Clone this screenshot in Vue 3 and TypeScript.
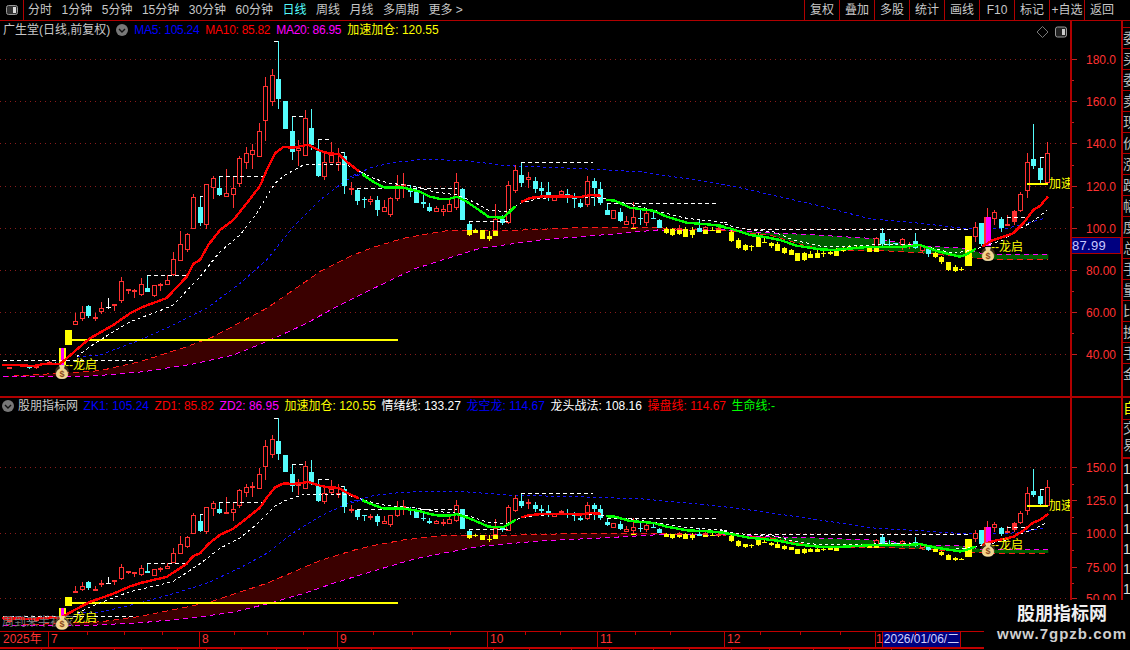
<script setup lang="ts">
type Pt = [number, number]
type Raw = [number, number, number, number, number, string]

const z3 = (x: number, y: number): Pt => [x / 3, 60 + y / 3]
const z4 = (x: number, y: number): Pt => [340 + x / 3, 140 + y / 3]
const z5 = (x: number, y: number): Pt => [720 + x / 3, 120 + y / 3]
const list = (f: (x: number, y: number) => Pt, a: number[]): Pt[] => {
  const out: Pt[] = []
  for (let i = 0; i < a.length; i += 2) out.push(f(a[i], a[i + 1]))
  return out
}

const c3: Raw[] = [
  [28, 922, 928, 920, 928, 'r'], [88, 920, 924, 916, 926, 'c'], [110, 918, 925, 916, 926, 'r'], [148, 905, 912, 904, 914, 'r'], [165, 908, 910, 905, 914, 'c'],
  [226, 784, 794, 760, 794, 'r'], [247, 757, 777, 737, 782, 'r'], [265, 738, 768, 736, 775, 'c'], [287, 772, 776, 760, 782, 'r'], [304, 745, 755, 727, 762, 'r'],
  [324, 742, 745, 714, 748, 'w'], [344, 731, 734, 731, 752, 'r'], [364, 664, 722, 652, 728, 'r'], [385, 686, 692, 686, 702, 'r'], [403, 690, 692, 688, 713, 'r'],
  [424, 673, 704, 655, 708, 'r'], [442, 684, 696, 645, 696, 'c'], [463, 676, 709, 674, 711, 'r'], [482, 673, 678, 668, 692, 'r'], [502, 661, 674, 645, 674, 'r'],
  [520, 598, 646, 576, 648, 'r'], [541, 553, 602, 514, 602, 'r'], [562, 522, 569, 518, 575, 'r'], [580, 412, 508, 403, 508, 'r'], [601, 441, 489, 408, 497, 'c'],
  [619, 373, 494, 373, 508, 'r'], [640, 354, 383, 348, 418, 'r'], [658, 384, 405, 349, 407, 'c'], [679, 400, 410, 327, 410, 'r'], [700, 385, 404, 349, 443, 'r'],
  [718, 295, 371, 289, 381, 'r'], [739, 280, 308, 262, 326, 'r'], [757, 271, 284, 252, 326, 'r'], [778, 214, 290, 188, 290, 'r'], [796, 79, 182, 52, 242, 'r'],
  [817, 46, 125, 27, 137, 'r'], [835, 57, 117, -57, 146, 'c'], [856, 123, 207, 123, 207, 'c'], [877, 213, 275, 168, 300, 'c'], [895, 263, 272, 240, 318, 'r'],
  [916, 175, 288, 150, 288, 'r'], [934, 204, 256, 148, 270, 'c'], [955, 274, 348, 238, 352, 'c'], [973, 305, 350, 274, 360, 'r'], [994, 286, 309, 246, 310, 'r'],
  [1015, 305, 315, 265, 332, 'r'],
]
const c4: Raw[] = [
  [13, 47, 137, 35, 162, 'c'], [34, 143, 149, 127, 165, 'r'], [52, 150, 183, 148, 196, 'c'], [72, 176, 177, 172, 204, 'c'], [91, 178, 186, 168, 196, 'r'],
  [112, 180, 210, 168, 228, 'c'], [133, 202, 215, 180, 215, 'r'], [151, 175, 224, 172, 232, 'r'], [172, 136, 177, 105, 182, 'r'], [190, 132, 136, 99, 175, 'r'],
  [211, 148, 156, 135, 172, 'c'], [229, 155, 188, 140, 190, 'c'], [250, 187, 191, 160, 205, 'c'], [268, 201, 213, 190, 216, 'c'], [289, 205, 215, 198, 215, 'r'],
  [310, 208, 215, 195, 228, 'r'], [328, 192, 215, 175, 217, 'r'], [349, 126, 204, 99, 210, 'r'], [367, 147, 240, 145, 240, 'c'], [388, 252, 270, 245, 270, 'c'],
  [388, 270, 285, 270, 288, 'y'], [406, 270, 278, 268, 280, 'y'], [427, 270, 297, 270, 297, 'y'], [448, 288, 297, 273, 303, 'y'], [466, 272, 288, 272, 288, 'y'],
  [466, 238, 272, 193, 272, 'r'], [487, 236, 248, 225, 254, 'c'], [505, 136, 250, 123, 252, 'r'], [526, 91, 152, 75, 160, 'r'], [544, 105, 130, 68, 140, 'c'],
  [565, 112, 119, 97, 144, 'r'], [586, 123, 147, 112, 160, 'c'], [604, 144, 153, 125, 165, 'c'], [625, 156, 165, 126, 182, 'c'], [643, 171, 182, 165, 184, 'r'],
  [664, 154, 166, 150, 175, 'r'], [682, 162, 165, 146, 190, 'c'], [703, 175, 178, 160, 204, 'c'], [721, 190, 200, 178, 203, 'c'], [742, 124, 194, 109, 200, 'r'],
  [763, 123, 144, 115, 197, 'c'], [781, 147, 188, 125, 196, 'c'], [802, 210, 224, 190, 226, 'c'], [820, 211, 236, 211, 236, 'r'], [841, 215, 243, 205, 247, 'c'],
  [859, 244, 254, 228, 254, 'r'], [880, 264, 266, 251, 268, 'y'], [880, 231, 251, 187, 264, 'r'], [901, 235, 236, 205, 254, 'c'], [919, 220, 248, 207, 258, 'r'],
  [940, 233, 234, 215, 237, 'c'], [958, 240, 263, 238, 263, 'c'], [979, 268, 279, 262, 281, 'y'], [997, 268, 285, 265, 288, 'y'], [1018, 270, 282, 268, 284, 'y'],
  [1018, 263, 270, 255, 270, 'r'], [1036, 268, 290, 262, 292, 'y'], [1057, 270, 284, 262, 294, 'y'], [1078, 265, 275, 237, 275, 'c'], [1096, 271, 281, 271, 282, 'y'],
  [1096, 261, 271, 258, 271, 'r'], [1117, 270, 272, 262, 274, 'y'], [1135, 270, 278, 270, 279, 'y'], [1135, 265, 270, 260, 270, 'r'],
]
const c5: Raw[] = [
  [34, 335, 362, 325, 365, 'y'], [55, 360, 385, 355, 388, 'y'], [76, 376, 390, 372, 392, 'y'], [94, 378, 380, 375, 392, 'y'], [115, 352, 380, 340, 382, 'y'],
  [133, 365, 367, 350, 368, 'y'], [154, 369, 378, 365, 383, 'y'], [172, 372, 392, 367, 394, 'y'], [193, 384, 398, 380, 402, 'y'], [214, 389, 404, 388, 404, 'y'],
  [232, 400, 422, 398, 423, 'y'], [253, 398, 420, 395, 423, 'y'], [271, 401, 413, 393, 414, 'y'], [292, 398, 413, 388, 414, 'y'], [310, 400, 402, 394, 410, 'y'],
  [331, 396, 403, 392, 405, 'y'], [349, 390, 407, 385, 408, 'y'], [370, 385, 392, 378, 395, 'y'], [388, 382, 387, 376, 388, 'y'], [409, 380, 385, 376, 388, 'y'],
  [448, 385, 395, 382, 396, 'y'], [469, 385, 395, 382, 396, 'y'], [469, 355, 382, 352, 384, 'r'], [487, 340, 372, 325, 380, 'c'], [508, 372, 374, 357, 382, 'c'],
  [526, 370, 373, 368, 376, 'c'], [547, 358, 375, 355, 390, 'r'], [568, 374, 376, 365, 388, 'r'], [586, 364, 385, 340, 388, 'c'], [607, 378, 392, 375, 398, 'r'],
  [625, 385, 403, 383, 410, 'c'], [646, 400, 411, 396, 413, 'y'], [664, 412, 427, 408, 432, 'y'], [685, 426, 451, 425, 452, 'y'], [706, 441, 453, 436, 456, 'y'],
  [724, 446, 447, 440, 453, 'y'], [766, 320, 350, 305, 366, 'r'], [784, 308, 373, 308, 378, 'c'], [823, 276, 297, 270, 316, 'r'], [844, 297, 325, 292, 336, 'c'],
  [862, 311, 315, 285, 318, 'r'], [883, 273, 305, 270, 315, 'R'], [901, 222, 274, 216, 276, 'r'], [922, 127, 212, 100, 233, 'r'], [940, 117, 137, 12, 146, 'c'],
  [961, 144, 180, 110, 190, 'c'], [982, 100, 190, 66, 196, 'r'],
]
const allCandles: { x: number; t: number; b: number; h: number; l: number; k: string }[] = []
const addC = (f: (x: number, y: number) => Pt, arr: Raw[]) => {
  for (const r of arr) {
    const [x, t] = f(r[0], r[1])
    allCandles.push({ x, t, b: f(r[0], r[2])[1], h: f(r[0], r[3])[1], l: f(r[0], r[4])[1], k: r[5] })
  }
}
addC(z3, c3)
addC(z4, c4)
addC(z5, c5)

const thick: { c: string; p: Pt[] }[] = [
  { c: '#ff0000', p: list(z3, [10, 915, 60, 916, 100, 918, 130, 912, 180, 912, 200, 895, 240, 860, 270, 835, 340, 795, 390, 760, 425, 742, 500, 714, 560, 650, 580, 612, 600, 600, 625, 555, 660, 510, 700, 480, 740, 430, 780, 378, 800, 330, 825, 280, 850, 261, 880, 263, 925, 254, 960, 272, 985, 280, 1015, 282, 1040, 305, 1075, 332]) },
  { c: '#00ff00', p: [...list(z3, [1090, 342]), ...list(z4, [70, 105, 100, 125, 130, 142, 190, 143, 240, 155, 270, 170, 300, 177, 330, 176, 350, 170, 380, 185, 420, 212, 445, 230, 490, 233, 525, 200])] },
  { c: '#ff0000', p: list(z4, [545, 185, 570, 174, 610, 169, 700, 170, 720, 172, 750, 165, 780, 167]) },
  { c: '#00ff00', p: [...list(z4, [802, 180, 825, 182, 870, 203, 940, 212, 980, 230, 1040, 248, 1100, 253, 1150, 258]), ...list(z5, [0, 320, 30, 325, 90, 345, 130, 350, 180, 360, 230, 377, 300, 388, 340, 390, 400, 385, 450, 380, 550, 380, 600, 375, 650, 393, 720, 410, 740, 403, 765, 388])] },
  { c: '#ff0000', p: list(z5, [790, 378, 815, 362, 880, 340, 910, 310, 940, 270, 960, 258, 982, 232]) },
]
const whiteLine: Pt[] = [
  ...list(z3, [230, 890, 270, 860, 340, 815, 390, 785, 480, 752, 520, 735, 600, 650, 660, 575, 720, 525, 770, 460, 800, 410, 825, 370, 855, 345, 910, 315, 960, 312, 1040, 315, 1100, 345]),
  ...list(z4, [60, 95, 100, 115, 140, 128, 230, 140, 280, 155, 350, 165, 400, 185, 445, 210, 500, 215, 540, 190, 600, 175, 700, 170, 790, 175, 840, 185, 900, 200, 960, 215, 1040, 235, 1160, 248]),
  ...list(z5, [0, 307, 40, 320, 80, 328, 160, 335, 220, 360, 300, 378, 400, 378, 500, 372, 600, 375, 700, 400, 760, 390, 850, 360, 890, 330, 930, 310, 980, 272]),
]
const blueLine: Pt[] = [
  ...list(z3, [230, 890, 300, 885, 420, 840, 520, 795, 620, 745, 720, 670, 800, 600, 880, 500, 960, 420, 1040, 360, 1090, 340]),
  ...list(z4, [30, 110, 100, 80, 160, 68, 250, 58, 380, 62, 500, 77, 700, 85, 900, 95, 1100, 125, 1200, 143]),
  ...list(z5, [100, 212, 300, 258, 450, 296, 600, 310, 740, 326, 860, 325, 900, 315, 975, 295]),
]
const bandTop: Pt[] = [...list(z3, [10, 950, 300, 932, 420, 905, 560, 860, 640, 830, 800, 745, 960, 635, 1060, 585]), ...list(z4, [100, 322, 190, 295, 300, 275, 330, 271, 500, 272, 740, 262, 940, 262, 1020, 268, 1140, 272])]
const bandBot: Pt[] = [...list(z3, [10, 950, 280, 948, 430, 935, 580, 912, 700, 885, 800, 845, 920, 790, 1000, 745, 1100, 695]), ...list(z4, [220, 388, 300, 362, 420, 325, 600, 300, 810, 283, 950, 270, 1140, 271])]
const greenTop: Pt[] = list(z5, [0, 328, 130, 338, 250, 343, 470, 356, 600, 378, 740, 385, 790, 402, 985, 403])
const greenBot: Pt[] = list(z5, [0, 330, 150, 345, 260, 378, 340, 392, 490, 392, 600, 398, 760, 414, 850, 420, 985, 418])

const steps: [number, number, number][] = [
  [z3(10, 0)[0], z3(400, 0)[0], z3(0, 901)[1]], [z3(442, 0)[0], z3(560, 0)[0], z3(0, 645)[1]], [z3(658, 0)[0], z3(790, 0)[0], z3(0, 349)[1]],
  [z3(877, 0)[0], z3(916, 0)[0], z3(0, 169)[1]], [z3(955, 0)[0], z3(994, 0)[0], z3(0, 238)[1]], [z3(1033, 0)[0] - 3, z3(1033, 0)[0], z3(0, 275)[1]],
  [z3(1072, 0)[0], 456.7, z3(0, 385)[1]], [z4(388, 0)[0], z4(505, 0)[0], z4(0, 244)[1]], [z4(544, 0)[0], z4(760, 0)[0], z4(0, 67)[1]],
  [z4(802, 0)[0], z4(1135, 0)[0], z4(0, 190)[1]], [z5(80, 0)[0], z5(745, 0)[0], z5(0, 327)[1]], [z5(860, 0)[0], z5(920, 0)[0], z5(0, 290)[1]],
  [z3(835, 0)[0] - 4, z3(835, 0)[0], 41], [z5(961, 0)[0], z5(961, 0)[0] + 4, z5(0, 110)[1]], [z3(601, 0)[0], z3(601, 0)[0] + 3, z3(0, 408)[1]],
]

interface Pane {
  key: string
  h: number
  grid: number[]
  ticks: number[]
  minor: number[]
  labels: { y: number; t: string }[]
  top: string
  bot: string
  band: string
  gband: string
  gtop: string
  gbot: string
  blue: string
  white: string
  lines: { c: string; d: string }[]
  steps: { x1: number; x2: number; y: number }[]
  wicks: { x: number; y1: number; y2: number; c: string }[]
  bodies: { x: number; y: number; w: number; h: number; s: string; f: string }[]
  my: (y: number) => number
}

function pane(key: string, h: number, my: (y: number) => number, grid: number[], ticks: number[], labels: { y: number; t: string }[]): Pane {
  const s = (p: Pt[]) => p.map(q => `${q[0].toFixed(1)},${my(q[1]).toFixed(1)}`).join(' ')
  const wicks: Pane['wicks'] = []
  const bodies: Pane['bodies'] = []
  for (const c of allCandles) {
    const cx = Math.round(c.x - 0.5) + 0.5
    const col = c.k === 'c' ? '#54fcfc' : c.k === 'y' ? '#ffff00' : c.k === 'w' ? '#ffffff' : '#ff3232'
    const t = Math.round(my(c.t))
    const b = Math.max(Math.round(my(c.b)), t + 1)
    wicks.push({ x: cx, y1: Math.round(my(c.h)), y2: Math.round(my(c.l)), c: col })
    if (c.k === 'r') bodies.push({ x: cx - 2, y: t + 0.5, w: 4, h: Math.max(b - t - 1, 1), s: col, f: '#000' })
    else bodies.push({ x: cx - 2.5, y: t, w: 5, h: b - t, s: 'none', f: c.k === 'R' ? '#ff3232' : col })
  }
  return {
    key, h, my, grid, ticks, labels,
    minor: ticks.slice(0, -1).map((t, i) => (t + ticks[i + 1]) / 2),
    top: s(bandTop), bot: s(bandBot), band: s([...bandTop, ...[...bandBot].reverse()]),
    gband: s([...greenTop, ...[...greenBot].reverse()]), gtop: s(greenTop), gbot: s(greenBot),
    blue: s(blueLine), white: s(whiteLine),
    lines: thick.map(l => ({ c: l.c, d: s(l.p) })),
    steps: steps.map(q => ({ x1: q[0], x2: q[1], y: Math.round(my(q[2])) + 0.5 })),
    wicks, bodies,
  }
}

const upY = (y: number) => y - 21
const lowY = (y: number) => 429 + 0.619 * (y - 59) - 398
const panes: Pane[] = [
  pane('a', 375, upY, [59, 101, 143, 186, 228, 270, 312, 354].map(upY), [59, 101, 143, 186, 228, 270, 312, 354].map(upY),
    ['180.0', '160.0', '140.0', '120.0', '100.0', '80.00', '60.00', '40.00'].map((t, i) => ({ y: upY([59, 101.5, 143.5, 186, 228, 270.5, 312.5, 354.5][i]), t }))),
  pane('b', 232, lowY, [467, 533, 598].map(y => y - 398), [467, 500, 533, 567, 598].map(y => y - 398),
    ['150.0', '125.0', '100.0', '75.00', '50.00'].map((t, i) => ({ y: [467, 500, 533, 567, 598][i] - 398, t }))),
]

const leftTabs = [
  { t: '分时' }, { t: '1分钟' }, { t: '5分钟' }, { t: '15分钟' }, { t: '30分钟' }, { t: '60分钟' },
  { t: '日线', on: true }, { t: '周线' }, { t: '月线' }, { t: '多周期' }, { t: '更多 >' },
]
const rightTabs = ['复权', '叠加', '多股', '统计', '画线', 'F10', '标记', '+自选', '返回']
const legendA = [
  { t: 'MA5: 105.24', c: '#0000ff', tight: true }, { t: 'MA10: 85.82', c: '#ff0000', tight: true }, { t: 'MA20: 86.95', c: '#ff00ff', tight: true }, { t: '加速加仓: 120.55', c: '#ffff00' },
]
const legendB = [
  { t: 'ZK1: 105.24', c: '#0000ff' }, { t: 'ZD1: 85.82', c: '#ff0000' }, { t: 'ZD2: 86.95', c: '#ff00ff' }, { t: '加速加仓: 120.55', c: '#ffff00' },
  { t: '情绪线: 133.27', c: '#ffffff' }, { t: '龙空龙: 114.67', c: '#0000ff' }, { t: '龙头战法: 108.16', c: '#ffffff' }, { t: '操盘线: 114.67', c: '#ff0000' }, { t: '生命线:-', c: '#00ff00' },
]
const timeCells = [
  { t: '2025年', w: 49 }, { t: '7', w: 151 }, { t: '8', w: 138 }, { t: '9', w: 150 }, { t: '10', w: 110 }, { t: '11', w: 127 }, { t: '12', w: 151 }, { t: '1', w: 7 },
]
const timeTicks = [87, 124, 162, 234, 267, 303, 373, 412, 450, 525, 560, 635, 670, 760, 800, 840, 915]
const bottomCells = [42, 31, 42, 27, 36, 29, 35, 35, 31, 32, 32, 40, 38, 44, 36, 42, 38, 44, 36, 42, 38, 44, 36, 42, 38]
const sideTop = '委买委卖现价涨跌幅度总手量比换手金'.split('')
const sideNums = Array.from({ length: 7 }, () => '1')
const bags = [{ x: 62, y: 372 }, { x: 988, y: 254 }]
</script>

<template>
  <div class="screen">
    <header class="toolbar">
      <div class="corner">
        <svg width="12" height="10" viewBox="0 0 12 10">
          <rect x="0.5" y="0.5" width="11" height="9" rx="2" fill="#333" stroke="#999" />
          <rect x="7" y="2" width="3" height="6" fill="#ddd" />
        </svg>
      </div>
      <nav class="tabs">
        <span v-for="t in leftTabs" :key="t.t" :class="{ on: t.on }">{{ t.t }}</span>
      </nav>
      <nav class="actions">
        <span v-for="t in rightTabs" :key="t">{{ t }}</span>
      </nav>
    </header>

    <div class="body">
      <div class="main">
        <section v-for="(p, i) in panes" :key="p.key" class="pane" :class="'pane-' + p.key">
          <svg class="plot" width="1121" :height="p.h" :viewBox="`0 0 1121 ${p.h}`">
            <line v-for="g in p.grid" :key="'g' + g" x1="0" x2="1070" :y1="g + 0.5" :y2="g + 0.5" class="grid" />
            <polygon :points="p.band" fill="#3a0000" />
            <polygon :points="p.gband" fill="#005c00" />
            <polyline :points="p.top" class="dash-red" />
            <polyline :points="p.bot" class="dash-mag" />
            <polyline :points="p.gtop" class="dash-mag" />
            <polyline :points="p.gbot" class="dash-red" />
            <polyline :points="p.blue" class="dash-blue" />
            <g shape-rendering="crispEdges">
              <line v-for="(w, k) in p.wicks" :key="'w' + k" :x1="w.x" :x2="w.x" :y1="w.y1" :y2="w.y2" :stroke="w.c" />
              <rect v-for="(b, k) in p.bodies" :key="'b' + k" :x="b.x" :y="b.y" :width="b.w" :height="b.h" :fill="b.f" :stroke="b.s" />
              <!-- signal bars -->
              <rect x="65" :y="p.my(330)" width="7" :height="p.my(345) - p.my(330)" fill="#ffff00" />
              <rect x="72" :y="p.my(340) - 1" width="326" height="2" fill="#ffff00" />
              <rect x="59" :y="p.my(348)" width="7" :height="p.my(365) - p.my(348)" fill="#ffff00" />
              <rect x="61" :y="p.my(348)" width="3" :height="p.my(365) - p.my(348)" fill="#ff00ff" />
              <rect x="965" :y="p.my(236)" width="7" :height="p.my(266) - p.my(236)" fill="#ffff00" />
              <rect x="984" :y="p.my(217)" width="7" :height="p.my(246) - p.my(217)" fill="#ff3232" />
              <rect x="986" :y="p.my(217)" width="5" :height="p.my(246) - p.my(217)" fill="#ff00ff" />
              <line x1="987.5" x2="987.5" :y1="p.my(208)" :y2="p.my(217)" stroke="#ff3232" />
              <rect x="1027" :y="p.my(184) - 1" width="21" height="2" fill="#ffff00" />
            </g>
            <line v-for="(s, k) in p.steps" :key="'s' + k" :x1="s.x1" :x2="s.x2" :y1="s.y" :y2="s.y" class="dash-step" />
            <polyline :points="p.white" class="dash-white" />
            <polyline v-for="(l, k) in p.lines" :key="'l' + k" :points="l.d" :stroke="l.c" class="thick" />

            <text v-if="i === 1" x="2" y="228" class="ghost">周到来半初家</text>
            <text x="65" :y="p.my(365) + 4" class="mark">--龙启</text>
            <text x="991" :y="p.my(247) + 4" class="mark">--龙启</text>
            <text x="1049" :y="p.my(184) + 4" class="mark">加速</text>

            <g v-for="b in bags" :key="b.x" :transform="`translate(${b.x} ${p.my(b.y)})`">
              <circle r="7" fill="#6b4a20" opacity="0.55" />
              <path d="M-2.5 -6.5 L2.5 -6.5 L1.5 -3.5 C5 -2 6 1 5.5 3.5 C5 6 2.5 6.5 0 6.5 C-2.5 6.5 -5 6 -5.5 3.5 C-6 1 -5 -2 -1.5 -3.5 Z" fill="#f4d48a" stroke="#fff2c0" stroke-width="0.7" />
              <text y="4.5" text-anchor="middle" class="dollar">$</text>
            </g>

            <rect x="1070" y="0" width="51" :height="p.h" fill="#000" />
            <rect x="1070" y="0" width="2" :height="p.h" fill="#b00000" />
            <line v-for="t in p.ticks" :key="'t' + t" x1="1072" x2="1077" :y1="t + 0.5" :y2="t + 0.5" class="tick" />
            <line v-for="t in p.minor" :key="'m' + t" x1="1072" x2="1074" :y1="Math.round(t) + 0.5" :y2="Math.round(t) + 0.5" class="tick" />
            <text v-for="l in p.labels" :key="l.t" x="1086" :y="l.y + 4.5" class="axis">{{ l.t }}</text>
            <template v-if="i === 0">
              <rect x="1071.5" y="216.5" width="49" height="16" fill="#000080" stroke="#b00000" />
              <text x="1072" y="229" class="tag">87.99</text>
            </template>
          </svg>

          <div class="legend" :class="{ lower: i === 1 }">
            <span class="title">{{ i === 0 ? '广生堂(日线,前复权)' : '股朋指标网' }}</span>
            <svg class="chev" width="12" height="12" viewBox="0 0 12 12">
              <circle cx="6" cy="6" r="6" fill="#777" />
              <path d="M3 5 L6 8 L9 5" fill="none" stroke="#111" stroke-width="1.4" />
            </svg>
            <span v-for="l in (i === 0 ? legendA : legendB)" :key="l.t" :class="{ tight: (l as { tight?: boolean }).tight }" :style="{ color: l.c }">{{ l.t }}</span>
          </div>

          <svg v-if="i === 0" class="corner-tools" width="36" height="12" viewBox="0 0 36 12">
            <path d="M5.5 0.5 L11 6 L5.5 11.5 L0 6 Z" fill="none" stroke="#777" />
            <rect x="18.5" y="1" width="11" height="10" rx="2" fill="#222" stroke="#999" />
            <rect x="25" y="3" width="3" height="6" fill="#ccc" />
          </svg>
        </section>

        <div class="time">
          <div class="time-cells">
            <span v-for="c in timeCells" :key="c.t" class="cell" :style="{ width: c.w + 'px' }">{{ c.t }}</span>
            <span class="date">2026/01/06/二</span>
          </div>
          <i v-for="t in timeTicks" :key="t" class="ttick" :style="{ left: t + 'px' }"></i>
        </div>
        <div class="bottom">
          <span v-for="(w, k) in bottomCells" :key="k" :style="{ width: w + 'px' }"></span>
        </div>
      </div>

      <aside class="side">
        <div class="side-top">
          <span v-for="(c, k) in sideTop" :key="k">{{ c }}</span>
        </div>
        <div class="side-low">
          <span class="self">自</span>
          <span class="pair">交<br />易</span>
          <span v-for="(n, k) in sideNums" :key="k" class="num">{{ n }}</span>
        </div>
      </aside>
    </div>

    <div class="stamp">
      <strong>股朋指标网</strong>
      <em>www.7gpzb.com</em>
    </div>
  </div>
</template>

<style>
html, body { margin: 0; background: #000; }
</style>

<style scoped>
.screen {
  position: relative;
  width: 1130px;
  height: 650px;
  overflow: hidden;
  background: #000;
  display: flex;
  flex-direction: column;
  font: 12px/14px "Liberation Sans", "Noto Sans CJK SC", sans-serif;
  color: #c8c8c8;
}
.toolbar {
  height: 20px;
  flex: none;
  display: flex;
  align-items: stretch;
  border-bottom: 1px solid #b00000;
}
.corner {
  width: 23px;
  border-right: 1px solid #b00000;
  display: flex;
  align-items: center;
  justify-content: center;
}
.tabs {
  display: flex;
  align-items: center;
  gap: 9.5px;
  padding-left: 4px;
}
.tabs .on { color: #54fcfc; }
.actions {
  margin-left: auto;
  display: flex;
  padding-right: 11px;
}
.actions span {
  width: 35px;
  box-sizing: border-box;
  border-left: 1px solid #b00000;
  display: flex;
  align-items: center;
  justify-content: center;
}
.body {
  flex: 1;
  display: flex;
  min-height: 0;
}
.main {
  width: 1121px;
  flex: none;
  display: flex;
  flex-direction: column;
}
.pane { position: relative; flex: none; }
.pane-a { height: 375px; border-bottom: 2px solid #b00000; }
.pane-b { height: 232px; }
.plot { display: block; }
.legend {
  position: absolute;
  left: 3px;
  top: 2px;
  display: flex;
  align-items: center;
  gap: 6px;
  white-space: nowrap;
}
.legend .tight { letter-spacing: -0.28px; }
.legend.lower { left: 0; top: 1px; gap: 5.6px; }
.legend.lower .title { margin-left: 18px; }
.legend.lower .chev { position: absolute; left: 2px; top: 1px; }
.legend .chev { flex: none; }
.corner-tools { position: absolute; left: 1037px; top: 5px; }
.grid { stroke: #8a1c1c; stroke-dasharray: 1 4; shape-rendering: crispEdges; }
.tick { stroke: #c02020; shape-rendering: crispEdges; }
.axis { fill: #ff3232; font-size: 12px; }
.tag { fill: #c8c8ff; font-size: 13px; letter-spacing: 0.3px; }
.mark { fill: #ffff00; font-size: 12px; }
.ghost { fill: #777; font-size: 12px; }
.dollar { fill: #8a4a20; font-size: 9px; font-weight: bold; }
.thick { stroke-width: 2.4; stroke-linejoin: round; stroke-linecap: round; fill: none; shape-rendering: crispEdges; }
.dash-red { stroke: #ff1a1a; stroke-dasharray: 6 4; fill: none; shape-rendering: crispEdges; }
.dash-mag { stroke: #ff00ff; stroke-dasharray: 5 4; fill: none; shape-rendering: crispEdges; }
.dash-blue { stroke: #1414ff; stroke-dasharray: 3 3; fill: none; shape-rendering: crispEdges; }
.dash-white { stroke: #ffffff; stroke-dasharray: 3 3; fill: none; shape-rendering: crispEdges; }
.dash-step { stroke: #ffffff; stroke-dasharray: 4 3; shape-rendering: crispEdges; }
.time {
  position: relative;
  height: 15px;
  flex: none;
  border-top: 1px solid #c00000;
  border-bottom: 2px solid #c00000;
  margin-top: 1px;
}
.time-cells { display: flex; height: 100%; }
.cell {
  box-sizing: border-box;
  flex: none;
  border-right: 1px solid #c00000;
  color: #ff3232;
  padding-left: 2px;
  white-space: nowrap;
}
.cell:first-child { padding-left: 3px; }
.cell:nth-child(8) { padding-left: 0; }
.date {
  flex: none;
  width: 78px;
  box-sizing: border-box;
  background: #000080;
  color: #d0d0ff;
  text-align: center;
  border-right: 1px solid #c00000;
}
.ttick {
  position: absolute;
  top: 0;
  width: 1px;
  height: 3px;
  background: #c00000;
}
.bottom { display: flex; flex: 1; min-height: 0; overflow: hidden; }
.bottom span { flex: none; box-sizing: border-box; border-right: 1px solid #c00000; }
.side {
  flex: 1;
  border-left: 2px solid #b00000;
  overflow: hidden;
  display: flex;
  flex-direction: column;
  font-size: 14px;
  color: #b8b8b8;
}
.side-top {
  flex: none;
  height: 369px;
  padding-top: 6px;
  overflow: hidden;
  border-bottom: 2px solid #b00000;
}
.side-top span {
  display: block;
  height: 21px;
  line-height: 21px;
  box-sizing: border-box;
  border-top: 1px solid #b00000;
}
.side-low { display: flex; flex-direction: column; }
.self { height: 21px; line-height: 21px; color: #ffff00; border-bottom: 1px solid #b00000; }
.pair { line-height: 17px; height: 37px; border-bottom: 2px solid #b00000; }
.num { height: 20px; line-height: 20px; color: #ddd; }
.stamp {
  position: absolute;
  left: 984px;
  top: 600px;
  right: 0;
  bottom: 0;
  background: #000;
  display: flex;
  flex-direction: column;
  align-items: center;
  padding-left: 10px;
}
.stamp strong { color: #f0f0f0; font-size: 18px; line-height: 26px; margin-top: 1px; }
.stamp em { color: #cfcfcf; font-style: normal; font-weight: bold; font-size: 15px; line-height: 14px; letter-spacing: 1px; white-space: nowrap; }
</style>
